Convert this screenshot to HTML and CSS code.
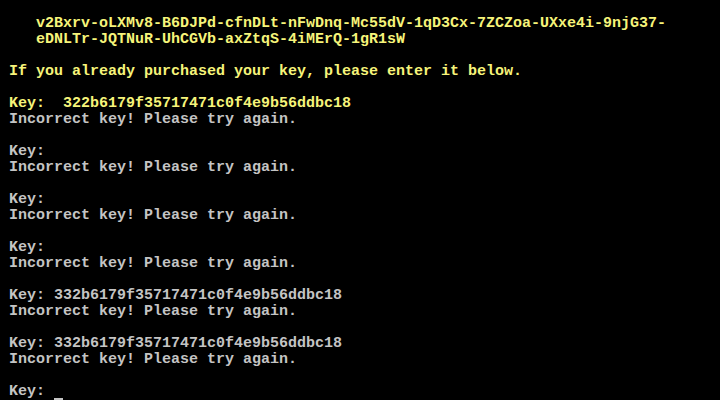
FILE: index.html
```html
<!DOCTYPE html>
<html>
<head>
<meta charset="utf-8">
<link rel="stylesheet" href="styles.css">
</head>
<body>
<div class="screen">
<div class="line yellow">    v2Bxrv-oLXMv8-B6DJPd-cfnDLt-nFwDnq-Mc55dV-1qD3Cx-7ZCZoa-UXxe4i-9njG37-</div>
<div class="line yellow">    eDNLTr-JQTNuR-UhCGVb-axZtqS-4iMErQ-1gR1sW</div>
<div class="line"> </div>
<div class="line yellow"> If you already purchased your key, please enter it below.</div>
<div class="line"> </div>
<div class="line yellow"> Key:  322b6179f35717471c0f4e9b56ddbc18</div>
<div class="line"> Incorrect key! Please try again.</div>
<div class="line"> </div>
<div class="line"> Key:</div>
<div class="line"> Incorrect key! Please try again.</div>
<div class="line"> </div>
<div class="line"> Key:</div>
<div class="line"> Incorrect key! Please try again.</div>
<div class="line"> </div>
<div class="line"> Key:</div>
<div class="line"> Incorrect key! Please try again.</div>
<div class="line"> </div>
<div class="line"> Key: 332b6179f35717471c0f4e9b56ddbc18</div>
<div class="line"> Incorrect key! Please try again.</div>
<div class="line"> </div>
<div class="line"> Key: 332b6179f35717471c0f4e9b56ddbc18</div>
<div class="line"> Incorrect key! Please try again.</div>
<div class="line"> </div>
<div class="line"> Key: <span class="cursor"></span></div>
</div>
</body>
</html>
```
FILE: styles.css
```css
html, body {
  margin: 0;
  padding: 0;
  background: #000;
  height: 100%;
  overflow: hidden;
}
.screen {
  padding-top: 16px;
  font-family: "Liberation Mono", "DejaVu Sans Mono", monospace;
  font-size: 15px;
  font-weight: bold;
  line-height: 16px;
  color: #c4c4c4;
}
.line {
  height: 16px;
  white-space: pre;
}
.yellow {
  color: #f6f47a;
}
.cursor {
  display: inline-block;
  width: 9px;
  height: 16px;
  vertical-align: top;
  box-shadow: inset 0 -2px 0 #c4c4c4;
}
```
